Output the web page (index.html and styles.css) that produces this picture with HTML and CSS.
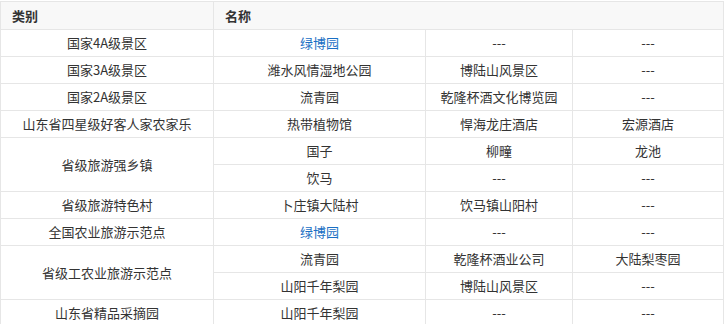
FILE: index.html
```html
<!DOCTYPE html>
<html lang="zh-CN">
<head>
<meta charset="utf-8">
<title>旅游资源</title>
<link rel="stylesheet" href="styles.css">
</head>
<body>
<table class="tbl">
  <colgroup>
    <col class="c1"><col class="c2"><col class="c3"><col class="c4">
  </colgroup>
  <thead>
    <tr><th>类别</th><th colspan="3">名称</th></tr>
  </thead>
  <tbody>
    <tr><td>国家4A级景区</td><td><a class="lnk" href="#">绿博园</a></td><td>---</td><td>---</td></tr>
    <tr><td>国家3A级景区</td><td>潍水风情湿地公园</td><td>博陆山风景区</td><td>---</td></tr>
    <tr><td>国家2A级景区</td><td>流青园</td><td>乾隆杯酒文化博览园</td><td>---</td></tr>
    <tr><td>山东省四星级好客人家农家乐</td><td>热带植物馆</td><td>悍海龙庄酒店</td><td>宏源酒店</td></tr>
    <tr><td rowspan="2">省级旅游强乡镇</td><td>国子</td><td>柳疃</td><td>龙池</td></tr>
    <tr><td>饮马</td><td>---</td><td>---</td></tr>
    <tr><td>省级旅游特色村</td><td>卜庄镇大陆村</td><td>饮马镇山阳村</td><td>---</td></tr>
    <tr><td>全国农业旅游示范点</td><td><a class="lnk" href="#">绿博园</a></td><td>---</td><td>---</td></tr>
    <tr><td rowspan="2">省级工农业旅游示范点</td><td>流青园</td><td>乾隆杯酒业公司</td><td>大陆梨枣园</td></tr>
    <tr><td>山阳千年梨园</td><td>博陆山风景区</td><td>---</td></tr>
    <tr><td>山东省精品采摘园</td><td>山阳千年梨园</td><td>---</td><td>---</td></tr>
  </tbody>
</table>
</body>
</html>
```
FILE: styles.css
```css
html, body {
  margin: 0;
  padding: 0;
  background: #fff;
}
body {
  padding-top: 1px;
  font-family: "Noto Sans CJK SC", "Liberation Sans", sans-serif;
  font-size: 13px;
  color: #333;
}
.tbl {
  border-collapse: collapse;
  table-layout: fixed;
  width: 723px;
}
.c1 { width: 213px; }
.c2 { width: 212px; }
.c3 { width: 147px; }
.c4 { width: 151px; }
.tbl th, .tbl td {
  border: 1px solid #e6e6e6;
  padding: 0;
  line-height: 16px;
  vertical-align: middle;
}
.tbl th {
  height: 27px;
  background: #f8f8f8;
  text-align: left;
  padding-left: 11px;
  font-weight: bold;
  color: #333;
}
.tbl td {
  height: 26px;
  text-align: center;
}
.lnk {
  color: #1a6fc4;
  text-decoration: none;
}
```
